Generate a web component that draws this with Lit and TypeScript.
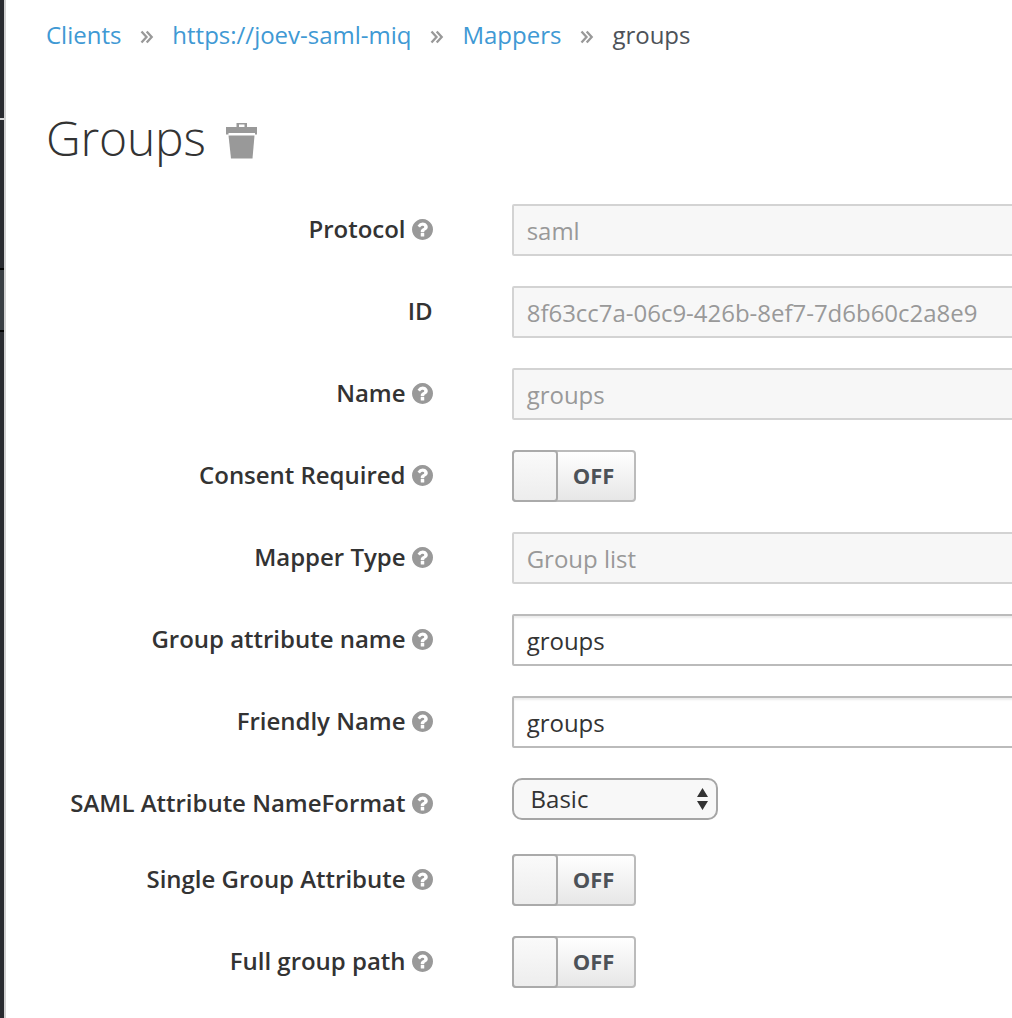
import { LitElement, html, css, svg, nothing } from "lit";
import { customElement } from "lit/decorators.js";

type Row = { label: string; help?: boolean; kind: "disabled" | "text" | "toggle" | "select"; value: string };

const rows: Row[] = [
  { label: "Protocol", help: true, kind: "disabled", value: "saml" },
  { label: "ID", kind: "disabled", value: "8f63cc7a-06c9-426b-8ef7-7d6b60c2a8e9" },
  { label: "Name", help: true, kind: "disabled", value: "groups" },
  { label: "Consent Required", help: true, kind: "toggle", value: "OFF" },
  { label: "Mapper Type", help: true, kind: "disabled", value: "Group list" },
  { label: "Group attribute name", help: true, kind: "text", value: "groups" },
  { label: "Friendly Name", help: true, kind: "text", value: "groups" },
  { label: "SAML Attribute NameFormat", help: true, kind: "select", value: "Basic" },
  { label: "Single Group Attribute", help: true, kind: "toggle", value: "OFF" },
  { label: "Full group path", help: true, kind: "toggle", value: "OFF" },
];

const helpIcon = html`<svg class="help" viewBox="0 0 1536 1536">${svg`<path d="M896 1248v-192q0-14-9-23t-23-9h-192q-14 0-23 9t-9 23v192q0 14 9 23t23 9h192q14 0 23-9t9-23zM1152 576q0-88-55.5-163t-138.5-116-170-41q-243 0-371 213-15 24 8 42l132 100q7 6 19 6 16 0 25-12 53-68 86-92 34-24 86-24 48 0 85.5 26t37.5 59q0 38-20 61t-68 45q-63 28-115.5 86.5t-52.5 125.5v36q0 14 9 23t23 9h192q14 0 23-9t9-23q0-19 21.5-49.5t54.5-49.5q32-18 49-28.5t46-35 44.5-48 28-60.5 12.5-81zM1536 768q0 209-103 385.5t-279.5 279.5-385.5 103-385.5-103-279.5-279.5-103-385.5 103-385.5 279.5-279.5 385.5-103 385.5 103 279.5 279.5 103 385.5z"/>`}</svg>`;

const separator = html`<svg class="sep" viewBox="0 0 14 14"><path d="M1.500 1.500L6.500 7L1.500 12.500M6.700 1.500L11.700 7L6.700 12.500" /></svg>`;

@customElement("app-root")
export class AppRoot extends LitElement {
  static styles = css`
    :host { display: flex; width: 1012px; height: 1018px; overflow: hidden; background: #fff; color: #333; font: 24px/36px "Open Sans", sans-serif; }
    * { box-sizing: border-box; }
    svg { display: block; flex: none; }
    .rail { flex: none; width: 6px; border-right: 2px solid #d1d1d1; background: #292b30; display: flex; flex-direction: column; padding-top: 118px; }
    .line { height: 2px; background: #d6d6d6; margin-bottom: 148px; }
    .active { height: 64px; background: #393f44; border: solid #030303; border-width: 2px 0; }
    .main { flex: none; width: 1046px; padding: 17px 0 0 40px; }
    .crumbs { display: flex; align-items: center; height: 36px; white-space: nowrap; color: #4d5258; letter-spacing: -0.01px; }
    .crumbs a { color: #4099d4; }
    .sep { width: 14px; height: 14px; margin: 3px 18px 0 19px; fill: none; stroke: #999; stroke-width: 2.3; }
    .title { display: flex; height: 66px; margin-top: 52px; }
    h1 { margin: 0; font-size: 48px; line-height: 66px; font-weight: 300; letter-spacing: -0.2px; }
    .trash { width: 32px; height: 38px; margin: 17px 0 0 20px; fill: #999; }
    .form { display: flex; flex-direction: column; gap: 30px; margin-top: 33px; }
    .row { display: flex; height: 52px; }
    .row.short { height: 46px; }
    .label { display: flex; width: 386.5px; margin-right: 79.5px; justify-content: flex-end; padding-top: 7px; font-weight: 600; line-height: 36px; white-space: nowrap; letter-spacing: -0.02px; }
    .help { width: 21px; height: 21px; margin: 8px 0 0 6px; fill: #999; }
    .field { flex: 1; height: 52px; border: 2px solid #bbb; border-radius: 2px; padding: 7px 13px 7px 12.700px; box-shadow: inset 0 2px 2px rgba(3,3,3,.075); white-space: nowrap; letter-spacing: -0.02px; }
    .field.disabled { color: #999; background: #f7f7f7; border-color: #d3d3d3; box-shadow: none; }
    .toggle { display: flex; width: 124px; height: 52px; border: 2px solid #bbb; border-radius: 4px; background: linear-gradient(#fff, #e7e7e7); }
    .knob { flex: none; width: 46px; height: 52px; margin: -2px 0 0 -2px; border: 2px solid #aaa; border-radius: 4px; background: linear-gradient(#fafafa, #ededed); }
    .state { flex: 1; padding-right: 5px; text-align: center; font-weight: 700; font-size: 22px; line-height: 47px; color: #4d5258; }
    .choice { display: flex; justify-content: space-between; width: 206px; height: 42px; border: 2px solid #a6a6a6; border-radius: 10px; background: #f8f8f8; padding: 0 8px 0 16.600px; line-height: 38px; }
    .arrows { width: 11px; height: 22px; margin-top: 8px; fill: #333; }
  `;

  private control(r: Row) {
    if (r.kind === "toggle") return html`<div class="toggle"><span class="knob"></span><span class="state">${r.value}</span></div>`;
    if (r.kind === "select")
      return html`<div class="choice"><span>${r.value}</span><svg class="arrows" viewBox="0 0 11 22"><path d="M0 9L5.5 0L11 9ZM0 13H11L5.5 22Z" /></svg></div>`;
    return html`<div class="field ${r.kind}">${r.value}</div>`;
  }

  render() {
    return html`
      <div class="rail"><div class="line"></div><div class="active"></div></div>
      <div class="main">
        <nav class="crumbs"><a>Clients</a>${separator}<a>https://joev-saml-miq</a>${separator}<a>Mappers</a>${separator}<span>groups</span></nav>
        <div class="title">
          <h1>Groups</h1>
          <svg class="trash" viewBox="0 0 32 38"><path fill-rule="evenodd" d="M10.500 1H21V5H31V12.500H29V11H2.500V12.500H0V5H10.500ZM13 2.500V5H18.500V2.500Z"/><path d="M2.500 13.500H28.500L26.500 36.500H5Z"/></svg>
        </div>
        <div class="form">
          ${rows.map((r) => html`<div class="row ${r.kind === "select" ? "short" : ""}"><div class="label"><span>${r.label}</span>${r.help ? helpIcon : nothing}</div>${this.control(r)}</div>`)}
        </div>
      </div>`;
  }
}
